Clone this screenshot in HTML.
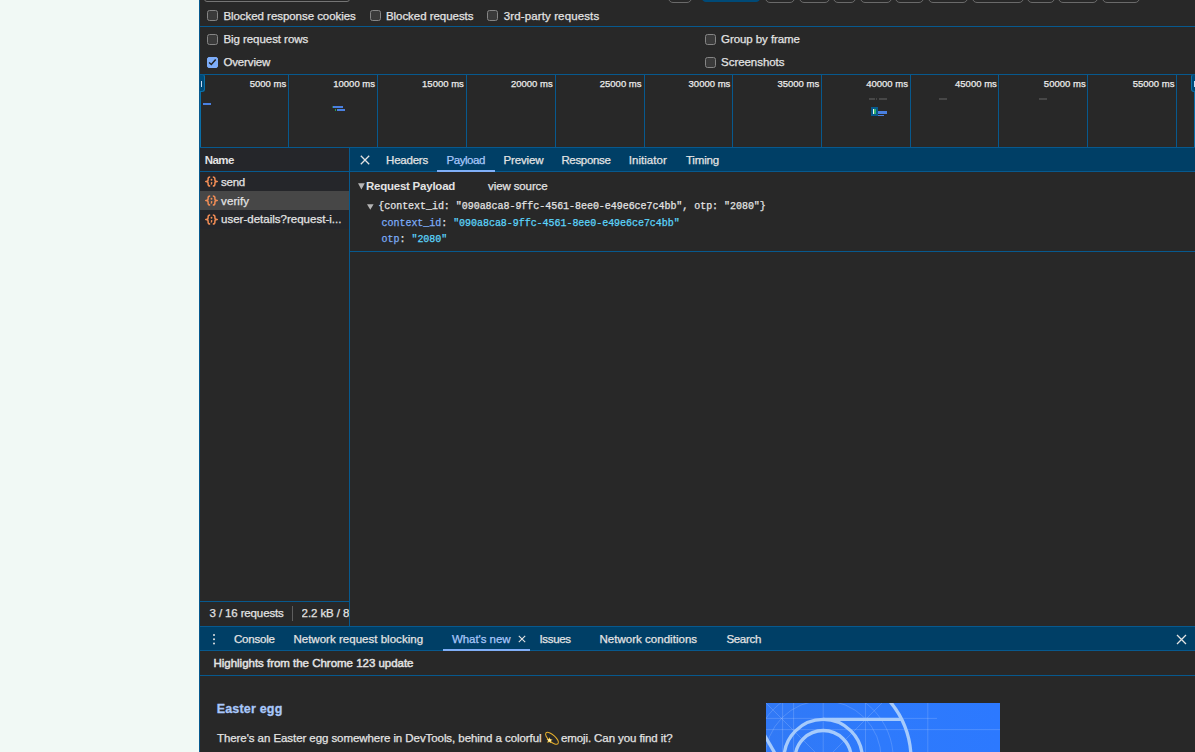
<!DOCTYPE html>
<html><head><meta charset="utf-8">
<style>
*{box-sizing:border-box;margin:0;padding:0}
html,body{width:1195px;height:752px;overflow:hidden;background:#282828}
body{position:relative;font-family:"Liberation Sans",sans-serif;font-size:11.5px;color:#e3e3e3}
.abs{position:absolute}
.left{left:0;top:0;width:199px;height:752px;background:#f1f9f5}
.vline{position:absolute;background:#07598e;width:1px}
.hline{position:absolute;background:#07598e;height:1px}
.t{position:absolute;white-space:nowrap;color:#e3e3e3;-webkit-text-stroke:0.25px}
.cb{position:absolute;width:11px;height:11px;border:1px solid #858585;border-radius:2.5px;background:#3a3a3a}
.cb.on{background:#7dadf9;border-color:#7dadf9;width:11px;height:11px;border-radius:2px}
.tabbar{position:absolute;background:#003f66}
.mono{position:absolute;white-space:nowrap;font-family:"Liberation Mono",monospace;font-size:10px;letter-spacing:-0.04px;color:#e3e3e3;line-height:12px}
.btn{position:absolute;top:-10px;height:13px;border:1px solid #6a6a6a;border-radius:5px}
.gl{position:absolute;top:75px;width:1px;height:72px;background:#07598e}
</style></head><body>
<div class="abs left"></div>
<div class="vline" style="left:199px;top:0;height:752px"></div>

<!-- top strip -->
<div class="btn" style="left:204px;width:146px;border-radius:3px;height:12.3px;border-color:#757575"></div>
<div class="btn" style="left:668px;width:23.5px"></div>
<div class="btn" style="left:701px;width:60px;height:12px;background:#004a77;border-color:#004a77"></div>
<div class="btn" style="left:764.6px;width:30.4px"></div>
<div class="btn" style="left:798.5px;width:31px"></div>
<div class="btn" style="left:832.6px;width:23.4px"></div>
<div class="btn" style="left:859.8px;width:31.8px"></div>
<div class="btn" style="left:895.4px;width:29px"></div>
<div class="btn" style="left:928.1px;width:39.6px"></div>
<div class="btn" style="left:971.6px;width:52.2px"></div>
<div class="btn" style="left:1027px;width:27.7px"></div>
<div class="btn" style="left:1058px;width:39.8px"></div>
<div class="btn" style="left:1101.5px;width:38.7px"></div>

<div class="cb" style="left:207px;top:10px"></div>
<div class="cb" style="left:370px;top:10px"></div>
<div class="cb" style="left:487px;top:10px"></div>
<div class="hline" style="left:200px;top:26px;width:995px"></div>

<div class="cb" style="left:207px;top:34px"></div>
<div class="cb on" style="left:207px;top:57px"></div>
<svg class="abs" style="left:207px;top:57px" width="11" height="11" viewBox="0 0 11 11"><path d="M2.1 5.5 L4.3 7.5 L8.7 2.4" fill="none" stroke="#222" stroke-width="1.5"/></svg>
<div class="cb" style="left:705px;top:34px"></div>
<div class="cb" style="left:705px;top:57px"></div>
<div class="hline" style="left:200px;top:74px;width:995px"></div>

<!-- overview timeline -->
<div class="gl" style="left:288px"></div><div class="gl" style="left:377px"></div><div class="gl" style="left:466px"></div>
<div class="gl" style="left:555px"></div><div class="gl" style="left:644px"></div><div class="gl" style="left:732px"></div>
<div class="gl" style="left:821px"></div><div class="gl" style="left:910px"></div><div class="gl" style="left:998px"></div>
<div class="gl" style="left:1087px"></div><div class="gl" style="left:1176px"></div>
<div class="vline" style="left:200px;top:75px;height:97px;background:#0a6ea6"></div>
<!-- handles -->
<div class="abs" style="left:199px;top:74px;width:6px;height:17.7px;background:#004a77;border:1px solid #0a70a8;border-left-color:#07598e;border-top-color:#07598e;border-radius:0 3px 3px 0"></div>
<div class="abs" style="left:201px;top:81.1px;width:1.2px;height:6px;background:#c9dcf5"></div>
<div class="abs" style="left:1191px;top:74px;width:7px;height:17.7px;background:#004a77;border:1.2px solid #0a70a8;border-top-color:#07598e;border-radius:3px 0 0 3px"></div>
<div class="vline" style="left:1194px;top:91px;height:56px;background:#0a6ea6"></div>
<div class="abs" style="left:1193.9px;top:81px;width:1.1px;height:5.8px;background:#c9dcf5"></div>
<!-- bars -->
<div class="abs" style="left:203px;top:103.3px;width:8px;height:2.1px;background:#4a80e0"></div>
<div class="abs" style="left:332.9px;top:106px;width:10.2px;height:2.1px;background:#4a80e0"></div>
<div class="abs" style="left:332px;top:106px;width:1px;height:2.1px;background:#2d6a3c"></div>
<div class="abs" style="left:336.9px;top:108.9px;width:8.4px;height:2.3px;background:#4a80e0"></div>
<div class="abs" style="left:335px;top:108.9px;width:1.1px;height:2.3px;background:#2ea043"></div>
<div class="abs" style="left:869px;top:98.1px;width:6px;height:2px;background:#474747"></div>
<div class="abs" style="left:878.7px;top:98.1px;width:8.4px;height:2px;background:#474747"></div>
<div class="abs" style="left:876.3px;top:98.4px;width:1.2px;height:1.5px;background:#444"></div>
<div class="abs" style="left:938.8px;top:98.1px;width:8.4px;height:2px;background:#474747"></div>
<div class="abs" style="left:1038.8px;top:98.1px;width:8.4px;height:2px;background:#474747"></div>
<div class="abs" style="left:871.1px;top:107.2px;width:7px;height:9.1px;background:#07598b"></div>
<div class="abs" style="left:872.8px;top:108.8px;width:1.5px;height:5.1px;background:#f0f4f2"></div>
<div class="abs" style="left:874.2px;top:108.8px;width:1.4px;height:5.1px;background:#35b46e"></div>
<div class="abs" style="left:878.1px;top:111.1px;width:9px;height:2.5px;background:#4a80e0"></div>
<div class="abs" style="left:878.1px;top:114.7px;width:6px;height:1.8px;background:#4a80e0"></div>
<div class="hline" style="left:200px;top:147px;width:995px"></div>

<!-- name column -->
<div class="abs" style="left:200px;top:148px;width:149px;height:81px;background:#25262a"></div>
<div class="hline" style="left:200px;top:171px;width:149px"></div>
<div class="vline" style="left:349px;top:148px;height:478px"></div>
<div class="abs" style="left:200px;top:191px;width:149px;height:19px;background:#474747"></div>

<!-- tab bar -->
<div class="tabbar" style="left:350px;top:148px;width:845px;height:23px"></div>
<div class="hline" style="left:350px;top:171px;width:845px"></div>
<div class="abs" style="left:437px;top:170px;width:58.3px;height:2px;background:#80aff8"></div>
<svg class="abs" style="left:360px;top:155px" width="10" height="10" viewBox="0 0 10 10"><path d="M0.8 0.8 L9.2 9.2 M9.2 0.8 L0.8 9.2" stroke="#e3e3e3" stroke-width="1.3" fill="none"/></svg>

<!-- payload -->
<svg class="abs" style="left:358px;top:183px" width="7" height="7" viewBox="0 0 7 7"><path d="M0 0.3 L6.8 0.3 L3.4 6.5 Z" fill="#b4b4b4"/></svg>
<svg class="abs" style="left:367px;top:204.3px" width="7" height="6" viewBox="0 0 7 6"><path d="M0 0.2 L6.6 0.2 L3.3 5.8 Z" fill="#b4b4b4"/></svg>
<div class="hline" style="left:350px;top:251px;width:845px"></div>

<!-- status bar -->
<div class="hline" style="left:200px;top:601px;width:149px"></div>
<div class="abs" style="left:292px;top:606px;width:1px;height:15px;background:#5e5e5e"></div>
<div class="hline" style="left:200px;top:626px;width:995px"></div>

<!-- drawer -->
<div class="tabbar" style="left:200px;top:627px;width:995px;height:23px"></div>
<div class="hline" style="left:200px;top:650px;width:995px"></div>
<div class="abs" style="left:213px;top:634.3px;width:2.2px;height:2.2px;border-radius:1px;background:#e3e3e3;box-shadow:0 4.2px 0 #e3e3e3,0 8.4px 0 #e3e3e3"></div>
<div class="abs" style="left:443px;top:649px;width:87px;height:2px;background:#80aff8"></div>
<svg class="abs" style="left:518px;top:635.2px" width="8" height="8" viewBox="0 0 8 8"><path d="M0.8 0.8 L7.2 7.2 M7.2 0.8 L0.8 7.2" stroke="#e3e3e3" stroke-width="1.1" fill="none"/></svg>
<svg class="abs" style="left:1175.5px;top:633.5px" width="11" height="11" viewBox="0 0 11 11"><path d="M1 1 L10 10 M10 1 L1 10" stroke="#e3e3e3" stroke-width="1.3" fill="none"/></svg>
<div class="hline" style="left:200px;top:675px;width:995px"></div>

<!-- image -->
<svg class="abs" style="left:766px;top:703px" width="234" height="49" viewBox="766 703 234 49">
<defs><linearGradient id="bg" x1="0" x2="1" y1="0" y2="0"><stop offset="0" stop-color="#3179f6"/><stop offset="0.5" stop-color="#2e7afc"/><stop offset="1" stop-color="#2c79ff"/></linearGradient></defs>
<rect x="766" y="703" width="234" height="49" fill="url(#bg)"/>
<g fill="none" stroke="#ffffff" stroke-opacity="0.16" stroke-width="1">
<path d="M782.6 703V752M793.6 703V752M823.2 703V752M865.5 703V752M927.8 703V752"/>
<path d="M766 718.4H937M766 729.6H1000"/>
<path d="M766 703L815 752M882 703L833 752"/>
<circle cx="823.2" cy="758.6" r="58"/><circle cx="823.2" cy="758.6" r="70"/>
</g>
<g fill="none" stroke="#a6cbfc" stroke-width="3.3">
<circle cx="823.2" cy="758.6" r="87.8"/>
<circle cx="823.2" cy="758.6" r="39.2"/>
<circle cx="823.2" cy="758.6" r="28.1"/>
<path d="M823.2 719.4 L901.8 719.4"/>
<path d="M789.3 778.2 L759.3 726.2"/>
</g>
</svg>

<!-- icons {;} -->
<svg class="abs" style="left:204.5px;top:176.4px" width="13" height="11" viewBox="0 0 13 11"><g fill="none" stroke="#f08c55" stroke-width="1.5" stroke-linejoin="round"><path d="M5.2 0.9 C3.6 0.9 3.1 1.5 3.1 2.7 L3.1 4 C3.1 5 2.4 5.5 0.7 5.5 C2.4 5.5 3.1 6 3.1 7 L3.1 8.3 C3.1 9.5 3.6 10.1 5.2 10.1"/><path d="M7.8 0.9 C9.4 0.9 9.9 1.5 9.9 2.7 L9.9 4 C9.9 5 10.6 5.5 12.3 5.5 C10.6 5.5 9.9 6 9.9 7 L9.9 8.3 C9.9 9.5 9.4 10.1 7.8 10.1"/></g><circle cx="6.5" cy="3.7" r="0.95" fill="#f08c55"/><path d="M6.5 6.1 a0.95 0.95 0 0 1 0.9 1.2 L6.2 9 L5.6 8.6 L6 7.7 a0.95 0.95 0 0 1 0.5 -1.6z" fill="#f08c55"/></svg>
<svg class="abs" style="left:204.5px;top:195.4px" width="13" height="11" viewBox="0 0 13 11"><g fill="none" stroke="#f08c55" stroke-width="1.5" stroke-linejoin="round"><path d="M5.2 0.9 C3.6 0.9 3.1 1.5 3.1 2.7 L3.1 4 C3.1 5 2.4 5.5 0.7 5.5 C2.4 5.5 3.1 6 3.1 7 L3.1 8.3 C3.1 9.5 3.6 10.1 5.2 10.1"/><path d="M7.8 0.9 C9.4 0.9 9.9 1.5 9.9 2.7 L9.9 4 C9.9 5 10.6 5.5 12.3 5.5 C10.6 5.5 9.9 6 9.9 7 L9.9 8.3 C9.9 9.5 9.4 10.1 7.8 10.1"/></g><circle cx="6.5" cy="3.7" r="0.95" fill="#f08c55"/><path d="M6.5 6.1 a0.95 0.95 0 0 1 0.9 1.2 L6.2 9 L5.6 8.6 L6 7.7 a0.95 0.95 0 0 1 0.5 -1.6z" fill="#f08c55"/></svg>
<svg class="abs" style="left:204.5px;top:213.5px" width="13" height="11" viewBox="0 0 13 11"><g fill="none" stroke="#f08c55" stroke-width="1.5" stroke-linejoin="round"><path d="M5.2 0.9 C3.6 0.9 3.1 1.5 3.1 2.7 L3.1 4 C3.1 5 2.4 5.5 0.7 5.5 C2.4 5.5 3.1 6 3.1 7 L3.1 8.3 C3.1 9.5 3.6 10.1 5.2 10.1"/><path d="M7.8 0.9 C9.4 0.9 9.9 1.5 9.9 2.7 L9.9 4 C9.9 5 10.6 5.5 12.3 5.5 C10.6 5.5 9.9 6 9.9 7 L9.9 8.3 C9.9 9.5 9.4 10.1 7.8 10.1"/></g><circle cx="6.5" cy="3.7" r="0.95" fill="#f08c55"/><path d="M6.5 6.1 a0.95 0.95 0 0 1 0.9 1.2 L6.2 9 L5.6 8.6 L6 7.7 a0.95 0.95 0 0 1 0.5 -1.6z" fill="#f08c55"/></svg>
<!-- emoji -->
<div class="t" style="left:544.6px;top:731px;width:14px;font-size:11.5px;color:transparent;overflow:hidden">&#128171;</div>
<svg class="abs" style="left:543.6px;top:730.2px" width="16" height="16" viewBox="0 0 16 16"><ellipse cx="8" cy="8.3" rx="8.1" ry="3.4" transform="rotate(42 8 8.3)" fill="none" stroke="#e5ae2b" stroke-width="1.05"/><path d="M5.6 7.2 L6.4 9.2 L8.6 9.6 L6.9 10.9 L7.2 13.2 L5.4 11.9 L3.2 12.8 L4 10.6 L2.6 8.9 L4.8 8.9 Z" fill="#f6c945"/><circle cx="5.6" cy="10.3" r="1.3" fill="#fdf0b8"/></svg>
<!-- texts -->
<div class="t" id="t0" style="left:223.40px;top:10.11px;font-size:11.5px;line-height:normal;letter-spacing:-0.050px;">Blocked response cookies</div>
<div class="t" id="t1" style="left:385.90px;top:10.11px;font-size:11.5px;line-height:normal;letter-spacing:-0.039px;">Blocked requests</div>
<div class="t" id="t2" style="left:503.70px;top:10.11px;font-size:11.5px;line-height:normal;letter-spacing:0.126px;">3rd-party requests</div>
<div class="t" id="t3" style="left:223.40px;top:33.11px;font-size:11.5px;line-height:normal;letter-spacing:-0.054px;">Big request rows</div>
<div class="t" id="t4" style="left:223.40px;top:56.21px;font-size:11.5px;line-height:normal;letter-spacing:-0.130px;">Overview</div>
<div class="t" id="t5" style="left:721.10px;top:33.11px;font-size:11.5px;line-height:normal;letter-spacing:-0.079px;">Group by frame</div>
<div class="t" id="t6" style="left:721.10px;top:56.21px;font-size:11.5px;line-height:normal;letter-spacing:-0.058px;">Screenshots</div>
<div class="t" id="t7" style="left:204.70px;top:154.10px;font-size:11.5px;line-height:normal;letter-spacing:-0.507px;font-weight:bold;-webkit-text-stroke:0">Name</div>
<div class="t" id="t8" style="left:221.00px;top:175.71px;font-size:11.5px;line-height:normal;letter-spacing:-0.259px;">send</div>
<div class="t" id="t9" style="left:221.10px;top:194.71px;font-size:11.5px;line-height:normal;letter-spacing:0.069px;">verify</div>
<div class="t" id="t10" style="left:221.00px;top:212.82px;font-size:11.5px;line-height:normal;letter-spacing:0.009px;">user-details?request-i...</div>
<div class="t" id="t11" style="left:386.10px;top:154.10px;font-size:11.5px;line-height:normal;letter-spacing:-0.238px;">Headers</div>
<div class="t" id="t12" style="left:446.60px;top:154.10px;font-size:11.5px;line-height:normal;letter-spacing:-0.466px;color:#a8c7fa">Payload</div>
<div class="t" id="t13" style="left:503.60px;top:154.10px;font-size:11.5px;line-height:normal;letter-spacing:-0.172px;">Preview</div>
<div class="t" id="t14" style="left:561.40px;top:154.10px;font-size:11.5px;line-height:normal;letter-spacing:-0.325px;">Response</div>
<div class="t" id="t15" style="left:628.70px;top:154.10px;font-size:11.5px;line-height:normal;letter-spacing:0.053px;">Initiator</div>
<div class="t" id="t16" style="left:685.90px;top:154.10px;font-size:11.5px;line-height:normal;letter-spacing:-0.149px;">Timing</div>
<div class="t" id="t17" style="left:365.90px;top:179.60px;font-size:11.5px;line-height:normal;letter-spacing:-0.231px;font-weight:bold;-webkit-text-stroke:0">Request Payload</div>
<div class="t" id="t18" style="left:488.10px;top:179.60px;font-size:11.5px;line-height:normal;letter-spacing:-0.120px;">view source</div>
<div class="t" id="t19" style="left:209.60px;top:606.82px;font-size:11.5px;line-height:normal;letter-spacing:-0.132px;">3 / 16 requests</div>
<div class="t" id="t20" style="left:301.60px;top:606.82px;font-size:11.5px;line-height:normal;width:47px;overflow:hidden;letter-spacing:-0.1px">2.2 kB / 8</div>
<div class="t" id="t21" style="left:234.00px;top:633.01px;font-size:11.5px;line-height:normal;letter-spacing:-0.200px;">Console</div>
<div class="t" id="t22" style="left:293.40px;top:633.01px;font-size:11.5px;line-height:normal;letter-spacing:0.024px;">Network request blocking</div>
<div class="t" id="t23" style="left:451.90px;top:633.01px;font-size:11.5px;line-height:normal;letter-spacing:-0.048px;color:#a8c7fa">What's new</div>
<div class="t" id="t24" style="left:539.50px;top:633.01px;font-size:11.5px;line-height:normal;letter-spacing:-0.325px;">Issues</div>
<div class="t" id="t25" style="left:599.50px;top:633.01px;font-size:11.5px;line-height:normal;letter-spacing:0.025px;">Network conditions</div>
<div class="t" id="t26" style="left:726.40px;top:633.01px;font-size:11.5px;line-height:normal;letter-spacing:-0.306px;">Search</div>
<div class="t" id="t27" style="left:213.50px;top:657.01px;font-size:11.5px;line-height:normal;letter-spacing:-0.020px;-webkit-text-stroke:0.45px">Highlights from the Chrome 123 update</div>
<div class="t" id="t28" style="left:216.70px;top:701.91px;font-size:12.5px;line-height:normal;letter-spacing:0.188px;font-weight:bold;color:#a8c7fa;-webkit-text-stroke:0.3px">Easter egg</div>
<div class="t" id="t29" style="left:217.00px;top:731.91px;font-size:11.5px;line-height:normal;letter-spacing:-0.070px;">There's an Easter egg somewhere in DevTools, behind a colorful</div>
<div class="t" id="t30" style="left:560.90px;top:731.91px;font-size:11.5px;line-height:normal;letter-spacing:-0.091px;">emoji. Can you find it?</div>
<div class="t" id="t31" style="left:378.30px;top:200.91px;font-size:10px;line-height:normal;font-family:'Liberation Mono',monospace;letter-spacing:-0.04px;">{context_id: "090a8ca8-9ffc-4561-8ee0-e49e6ce7c4bb", otp: "2080"}</div>
<div class="t" id="t32" style="left:381.60px;top:217.71px;font-size:10px;line-height:normal;font-family:'Liberation Mono',monospace;letter-spacing:-0.04px;"><span style="color:#7cacf8">context_id</span>: <span style="color:#5cd5fb">"090a8ca8-9ffc-4561-8ee0-e49e6ce7c4bb"</span></div>
<div class="t" id="t33" style="left:381.60px;top:233.51px;font-size:10px;line-height:normal;font-family:'Liberation Mono',monospace;letter-spacing:-0.04px;"><span style="color:#7cacf8">otp</span>: <span style="color:#5cd5fb">"2080"</span></div>
<div class="t" id="t34" style="left:249.70px;top:78.21px;font-size:9.5px;line-height:normal;letter-spacing:0.009px;color:#ececec">5000 ms</div>
<div class="t" id="t35" style="left:333.23px;top:78.21px;font-size:9.5px;line-height:normal;letter-spacing:0.008px;color:#ececec">10000 ms</div>
<div class="t" id="t36" style="left:422.06px;top:78.21px;font-size:9.5px;line-height:normal;letter-spacing:0.008px;color:#ececec">15000 ms</div>
<div class="t" id="t37" style="left:510.89px;top:78.21px;font-size:9.5px;line-height:normal;letter-spacing:0.008px;color:#ececec">20000 ms</div>
<div class="t" id="t38" style="left:599.72px;top:78.21px;font-size:9.5px;line-height:normal;letter-spacing:0.008px;color:#ececec">25000 ms</div>
<div class="t" id="t39" style="left:688.55px;top:78.21px;font-size:9.5px;line-height:normal;letter-spacing:0.008px;color:#ececec">30000 ms</div>
<div class="t" id="t40" style="left:777.38px;top:78.21px;font-size:9.5px;line-height:normal;letter-spacing:0.008px;color:#ececec">35000 ms</div>
<div class="t" id="t41" style="left:866.21px;top:78.21px;font-size:9.5px;line-height:normal;letter-spacing:0.008px;color:#ececec">40000 ms</div>
<div class="t" id="t42" style="left:955.04px;top:78.21px;font-size:9.5px;line-height:normal;letter-spacing:0.008px;color:#ececec">45000 ms</div>
<div class="t" id="t43" style="left:1043.87px;top:78.21px;font-size:9.5px;line-height:normal;letter-spacing:0.008px;color:#ececec">50000 ms</div>
<div class="t" id="t44" style="left:1132.70px;top:78.21px;font-size:9.5px;line-height:normal;letter-spacing:0.008px;color:#ececec">55000 ms</div>
</body></html>
